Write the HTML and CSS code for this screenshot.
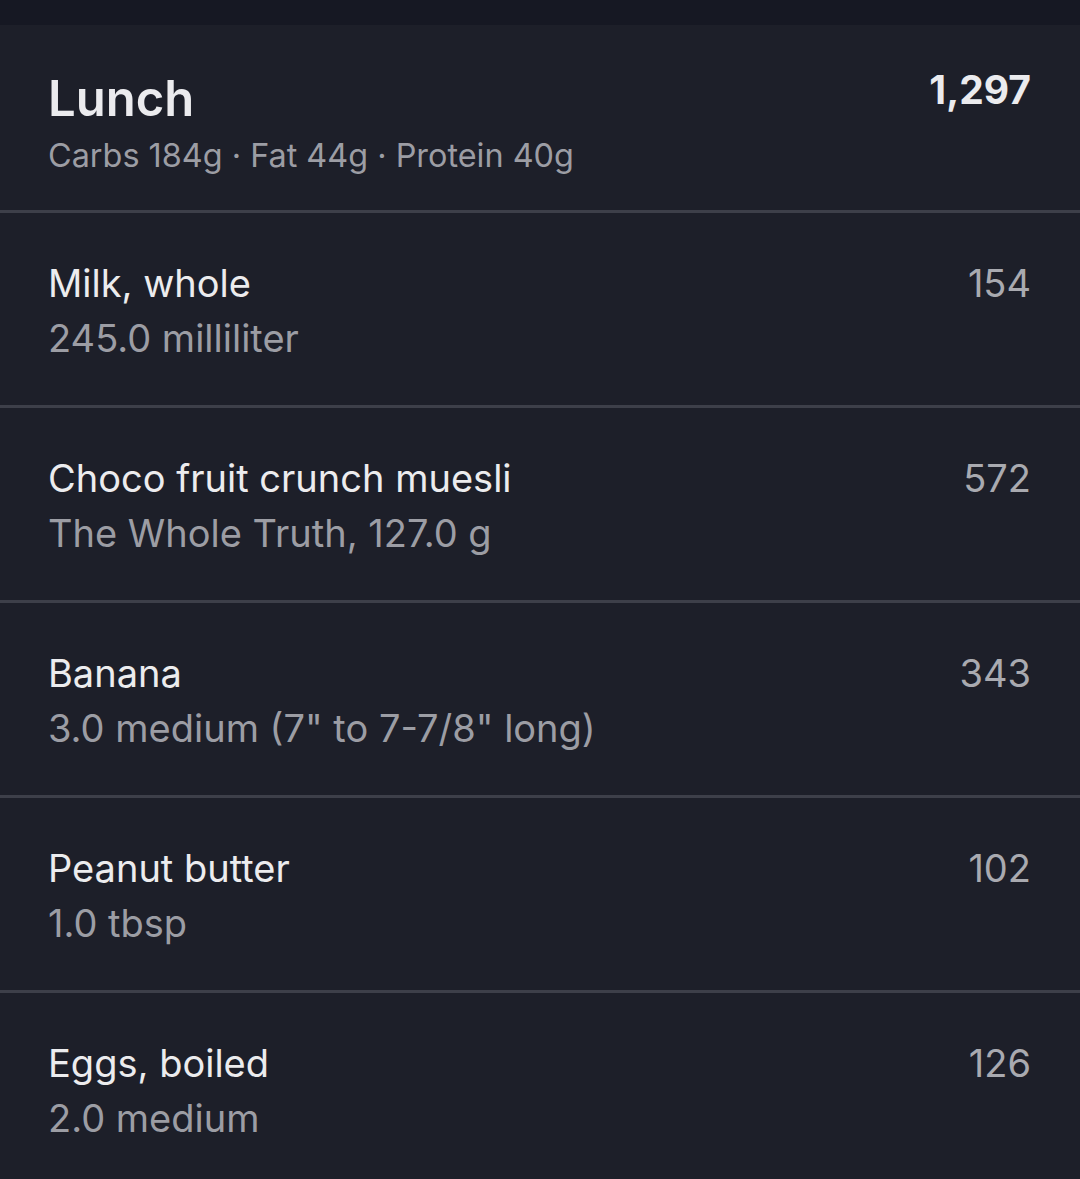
FILE: index.html
```html
<!DOCTYPE html>
<html lang="en">
<head>
<meta charset="utf-8">
<link rel="stylesheet" href="styles.css">
</head>
<body>
<div class="topbar"></div>
<section class="meal">
  <header class="meal-head">
    <div class="meal-info">
      <h1 class="meal-title">Lunch</h1>
      <div class="meal-macros">Carbs 184g · Fat 44g · Protein 40g</div>
    </div>
    <div class="meal-total">1,297</div>
  </header>
  <ul class="items">
    <li class="item">
      <div class="item-info">
        <div class="item-name">Milk, whole</div>
        <div class="item-detail">245.0 milliliter</div>
      </div>
      <div class="item-cal">154</div>
    </li>
    <li class="item">
      <div class="item-info">
        <div class="item-name">Choco fruit crunch muesli</div>
        <div class="item-detail">The Whole Truth, 127.0 g</div>
      </div>
      <div class="item-cal">572</div>
    </li>
    <li class="item">
      <div class="item-info">
        <div class="item-name">Banana</div>
        <div class="item-detail">3.0 medium (7" to 7-7/8" long)</div>
      </div>
      <div class="item-cal">343</div>
    </li>
    <li class="item">
      <div class="item-info">
        <div class="item-name">Peanut butter</div>
        <div class="item-detail">1.0 tbsp</div>
      </div>
      <div class="item-cal">102</div>
    </li>
    <li class="item">
      <div class="item-info">
        <div class="item-name">Eggs, boiled</div>
        <div class="item-detail">2.0 medium</div>
      </div>
      <div class="item-cal">126</div>
    </li>
  </ul>
</section>
</body>
</html>
```
FILE: styles.css
```css
html, body {
  margin: 0;
  padding: 0;
  background: #1d1f29;
  font-family: Inter, "Noto Sans", sans-serif;
  width: 1080px;
  height: 1179px;
  overflow: hidden;
}
.topbar {
  height: 25px;
  background: #161823;
}
.meal-head {
  display: flex;
  justify-content: space-between;
  align-items: flex-start;
  padding: 0 49px 0 48px;
  height: 188px;
  box-sizing: border-box;
  border-bottom: 3px solid #3d3f49;
}
.meal-title {
  margin: 0;
  font-size: 49px;
  font-weight: 600;
  color: #ebebee;
  line-height: 60px;
  padding-top: 44px;
}
.meal-macros {
  font-size: 32.4px;
  color: #9c9da4;
  line-height: 40px;
  margin-top: 7px;
}
.meal-total {
  font-size: 39px;
  font-weight: 700;
  color: #ebebee;
  line-height: 48px;
  padding-top: 41px;
}
.items {
  list-style: none;
  margin: 0;
  padding: 0;
}
.item {
  display: flex;
  justify-content: space-between;
  align-items: flex-start;
  height: 195px;
  box-sizing: border-box;
  padding: 0 49px 0 48px;
  border-bottom: 3px solid #3d3f49;
}
.item-name {
  font-size: 38px;
  color: #ececee;
  line-height: 44px;
  padding-top: 48px;
}
.item-detail {
  font-size: 38px;
  color: #9c9da4;
  line-height: 44px;
  margin-top: 11px;
}
.item-cal {
  font-size: 38px;
  color: #a9aab0;
  line-height: 44px;
  padding-top: 48px;
}
```
